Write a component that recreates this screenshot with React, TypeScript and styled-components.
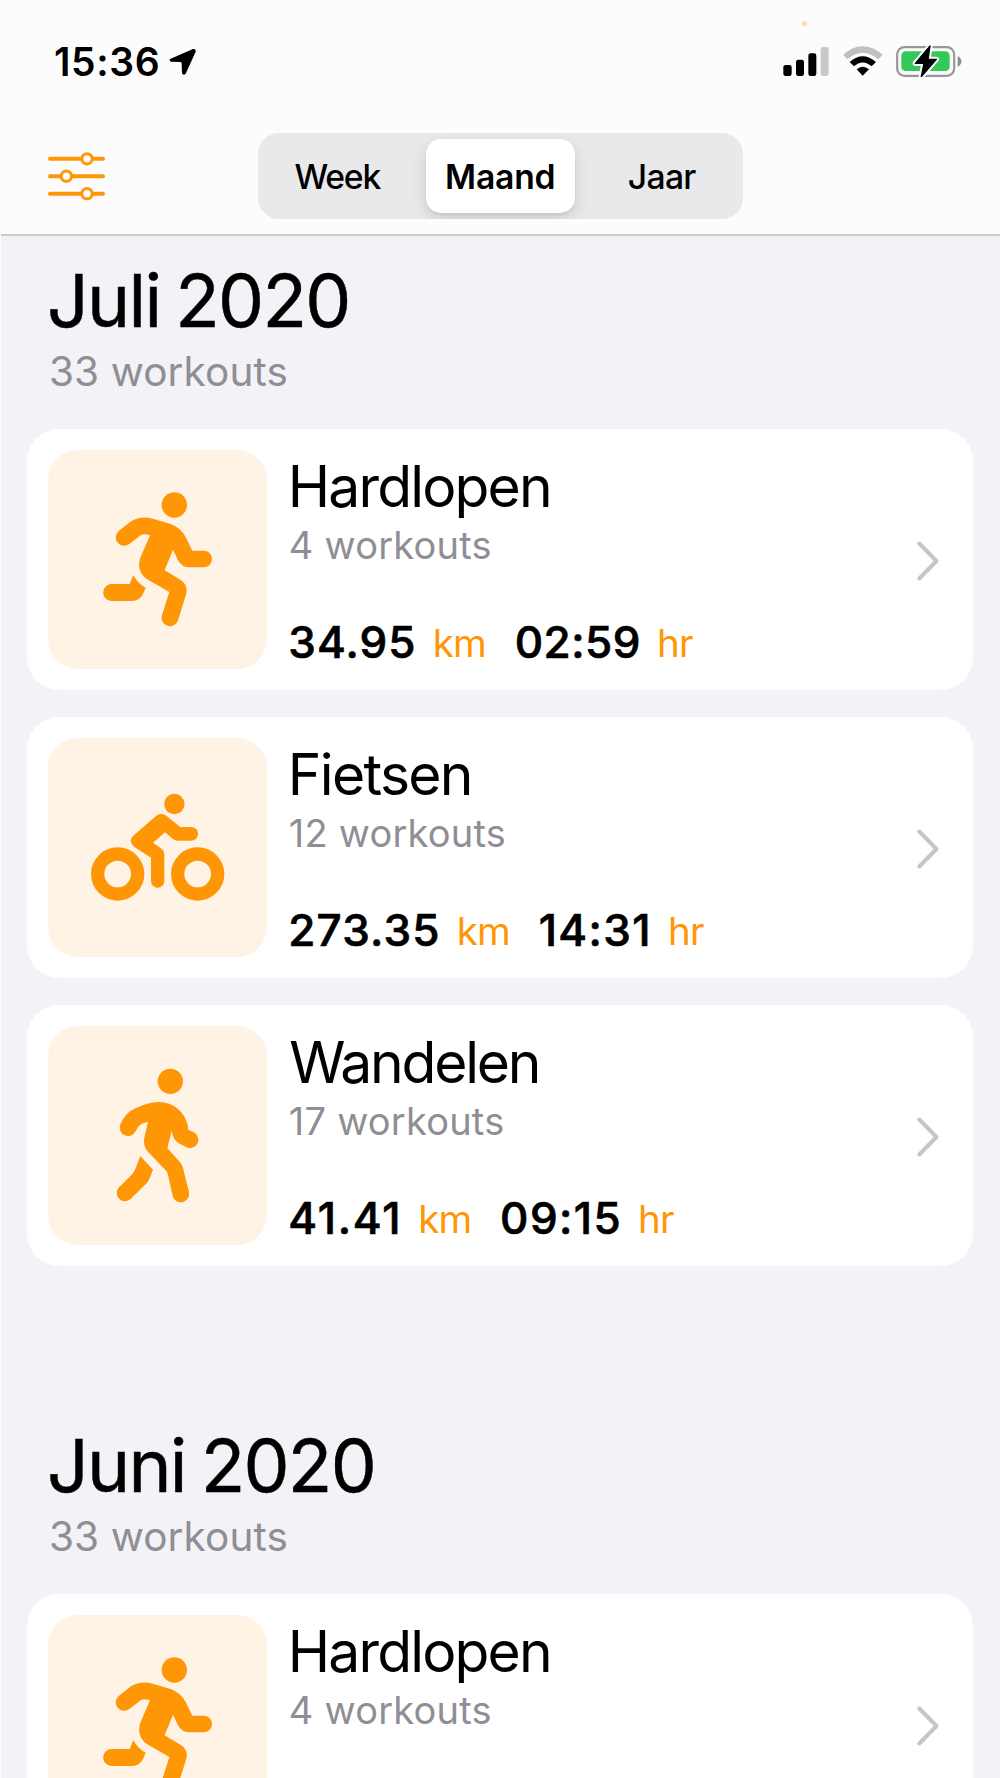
import React from "react";
import styled, { createGlobalStyle } from "styled-components";

const ORANGE = "#ff9605";
const GREY = "#8f8e94";

const GlobalStyle = createGlobalStyle`
  *, *::before, *::after { box-sizing: border-box; }
  body { margin: 0; background: #f2f2f7; overflow: hidden; }
`;

const Screen = styled.div`
  width: 1000px;
  height: 1778px;
  overflow: hidden;
  background: #f2f2f7;
  border-left: 1px solid #fbfbfc;
  font-family: "Inter", "Liberation Sans", sans-serif;
  color: #000;
`;

const Header = styled.header`
  height: 236px;
  background: #fcfcfc;
  border-bottom: 2px solid #cbcbcf;
`;

const StatusBar = styled.div`
  position: relative;
  height: 133px;
  padding: 37px 38px 0 53px;
  display: flex;
  justify-content: space-between;
`;

const RecordingDot = styled.span`
  position: absolute;
  left: 800.5px;
  top: 20.5px;
  width: 5px;
  height: 5px;
  border-radius: 50%;
  background: #fbdcae;
`;

const ClockGroup = styled.div`
  display: flex;
  height: 50px;
  align-items: center;
`;

const Clock = styled.span`
  font-size: 39px;
  font-weight: 600;
  line-height: 48px;
  letter-spacing: 0.6px;
`;

const LocationArrow = styled.svg`
  width: 27px;
  height: 28px;
  margin-left: 9px;
`;

const StatusIcons = styled.div`
  display: flex;
  gap: 13.67px;
  margin-top: 8px;
  height: 32px;
`;

const StatusIcon = styled.svg<{ $width: number }>`
  width: ${(p) => p.$width}px;
  height: 32px;
`;

const Toolbar = styled.div`
  display: grid;
  grid-template-columns: 210px 484.5px 1fr;
  align-items: start;
  padding-left: 47px;
`;

const FilterIcon = styled.svg`
  width: 57px;
  height: 49px;
  margin-top: 18.5px;
  fill: none;
  stroke: ${ORANGE};
`;

const Segmented = styled.div`
  display: grid;
  grid-template-columns: repeat(3, 1fr);
  height: 85.5px;
  padding: 6px 0 5.5px;
  border-radius: 21px;
  background: #e9e9eb;
  overflow: hidden;
`;

const Segment = styled.button<{ $active?: boolean; $tracking: number }>`
  margin: 0 6px;
  border: 0;
  padding: 1px 0 0;
  font-family: inherit;
  font-size: 33.7px;
  line-height: 40px;
  color: #000;
  font-weight: ${(p) => (p.$active ? 600 : 500)};
  letter-spacing: ${(p) => p.$tracking}px;
  border-radius: 15px;
  background: ${(p) => (p.$active ? "#fff" : "transparent")};
  box-shadow: ${(p) => (p.$active ? "0 6px 16px rgba(0, 0, 0, 0.13), 0 2px 3px rgba(0, 0, 0, 0.05)" : "none")};

  &:first-child {
    padding-right: 3px;
  }
`;

const Section = styled.section`
  padding: 25px 27px 0 26px;
  margin-bottom: 135px;
`;

const SectionHeader = styled.div`
  padding: 0 0 33px 20px;
`;

const SectionTitle = styled.h1`
  margin: 0;
  font-size: 73px;
  font-weight: 400;
  line-height: 80px;
  letter-spacing: -1.7px;
  word-spacing: -4px;
  -webkit-text-stroke: 0.5px #000;
  stroke-linejoin: round;
`;

const SectionCount = styled.p`
  margin: 7px 0 0 2px;
  font-size: 40.5px;
  line-height: 48px;
  letter-spacing: 0.1px;
  color: ${GREY};
`;

const CardList = styled.div`
  display: flex;
  flex-direction: column;
  gap: 27px;
`;

const Card = styled.article`
  display: flex;
  height: 261px;
  padding: 21px 34px 21px 21px;
  border-radius: 32px;
  background: #fff;
`;

const Tile = styled.svg`
  flex: none;
  width: 219px;
  height: 219px;
  border-radius: 30px;
  background: #fef3e4;
  fill: ${ORANGE};
`;

const Details = styled.div`
  flex: 1;
  padding: 4.5px 0 0 21.3px;
`;

const Name = styled.h2<{ $tracking: number; $indent: number }>`
  margin: 0 0 0 ${(p) => p.$indent}px;
  font-size: 57px;
  font-weight: 400;
  line-height: 64px;
  letter-spacing: ${(p) => p.$tracking}px;
`;

const Count = styled.p`
  margin: 4px 0 0 0.5px;
  font-size: 38px;
  line-height: 44px;
  letter-spacing: 0.23px;
  color: ${GREY};
`;

const Metrics = styled.div`
  display: flex;
  align-items: center;
  margin-top: 50px;
  gap: 28.5px;
`;

const Metric = styled.div`
  display: flex;
  align-items: center;
  gap: 16px;
  line-height: 50px;
`;

const Value = styled.span<{ $tracking: number }>`
  font-size: 44px;
  font-weight: 550;
  letter-spacing: ${(p) => p.$tracking}px;
  -webkit-text-stroke: 0.7px #000;
  stroke-linejoin: round;
`;

const Unit = styled.span`
  padding-top: 1px;
  font-size: 38.5px;
  letter-spacing: -0.7px;
  color: ${ORANGE};
`;

const Chevron = styled.svg`
  flex: none;
  align-self: center;
  width: 22px;
  height: 40px;
  margin-top: 2px;
  fill: none;
  stroke: #c6c6c9;
`;

type Sport = "run" | "ride" | "walk";

const SportIcon = ({ sport }: { sport: Sport }) => {
  if (sport === "run")
    return (
      <Tile viewBox="84 92 657 657">
        <circle cx="463" cy="257" r="38" />
        <path d="M297 334L333 306Q361 288 398 298L452 314Q482 325 497 353L517 394H551A25 25 0 0 1 551 444H510Q485 444 473 421L459 391L434 453L479 480Q506 496 499 523L474 603A25 25 0 0 1 426 588L448 518L384 481Q347 457 361 415L390 348Q372 341 360 349L328 374A25 25 0 0 1 297 334Z" />
        <path d="M340 467Q353 493 377 505L371 520Q360 545 336 545H275A25.5 25.5 0 0 1 275 494H329Z" />
      </Tile>
    );
  if (sport === "ride")
    return (
      <Tile viewBox="84 85 657 657">
        <g fill="none" stroke={ORANGE} strokeWidth="40">
          <circle cx="293" cy="493" r="60" />
          <circle cx="533" cy="493" r="60" />
        </g>
        <circle cx="463" cy="283" r="30.5" />
        <path d="M409 318Q423 307 437 317L481 352H514A20.5 20.5 0 0 1 514 393H473Q466 393 460 389L435 368L399 399L425 417Q433 423 433 434V514A20 20 0 0 1 393 514V444L342 411Q324 396 339 379Z" />
      </Tile>
    );
  return (
    <Tile viewBox="84 78 657 657">
      <circle cx="451" cy="244" r="38" />
      <path d="M301 373Q316 337 348 324L372 314Q392 306 416 306Q450 306 474 327Q496 346 503 375L505 389L525 399A25 25 0 0 1 503 443L479 431Q463 423 458 405L455 393L442 445L479 485Q486 493 489 504L507 577A25 25 0 0 1 458 587L443 521Q441 514 436 510L384 455Q368 437 373 413L384 365Q360 370 353 383L347 393A25 25 0 0 1 301 373Z" />
      <path d="M361 468L399 509L389 534Q386 543 380 550L331 598A25 25 0 0 1 295 564L338 521Q343 515 346 507Z" />
    </Tile>
  );
};

interface Activity {
  sport: Sport;
  name: string;
  nameTracking: number;
  nameIndent: number;
  count: number;
  distance: string;
  distanceTracking: number;
  time: string;
  timeTracking: number;
}

const running: Activity = {
  sport: "run", name: "Hardlopen", nameTracking: -1.85, nameIndent: -0.5, count: 4,
  distance: "34.95", distanceTracking: 1.1, time: "02:59", timeTracking: 0.5,
};
const cycling: Activity = {
  sport: "ride", name: "Fietsen", nameTracking: -1.67, nameIndent: -0.5, count: 12,
  distance: "273.35", distanceTracking: 1.2, time: "14:31", timeTracking: 1.4,
};
const walking: Activity = {
  sport: "walk", name: "Wandelen", nameTracking: -2.25, nameIndent: 1, count: 17,
  distance: "41.41", distanceTracking: 1.7, time: "09:15", timeTracking: 1.4,
};

const months = [
  { title: "Juli 2020", total: 33, activities: [running, cycling, walking] },
  { title: "Juni 2020", total: 33, activities: [running] },
];

const ActivityCard = ({ activity: a }: { activity: Activity }) => (
  <Card>
    <SportIcon sport={a.sport} />
    <Details>
      <Name $tracking={a.nameTracking} $indent={a.nameIndent}>{a.name}</Name>
      <Count>{a.count} workouts</Count>
      <Metrics>
        <Metric>
          <Value $tracking={a.distanceTracking}>{a.distance}</Value>
          <Unit>km</Unit>
        </Metric>
        <Metric>
          <Value $tracking={a.timeTracking}>{a.time}</Value>
          <Unit>hr</Unit>
        </Metric>
      </Metrics>
    </Details>
    <Chevron viewBox="0 0 22 40" strokeWidth="4" strokeLinecap="round" strokeLinejoin="round">
      <path d="M2.3 2.5L19.5 20L2.3 37.5" />
    </Chevron>
  </Card>
);

export default function App() {
  return (
    <Screen>
      <GlobalStyle />
      <Header>
        <StatusBar>
          <RecordingDot />
          <ClockGroup>
            <Clock>15:36</Clock>
            <LocationArrow viewBox="508 143 81 82">
              <path d="M580 145Q589 143 588 153L558 219Q552 226 547 218L546 188Q546 184 541 184L514 183Q506 179 513 174Z" />
            </LocationArrow>
          </ClockGroup>
          <StatusIcons>
            <StatusIcon $width={46} viewBox="850 135 138 96">
              <rect x="851" y="195" width="25" height="33" rx="7" />
              <rect x="889" y="179" width="24" height="49" rx="7" />
              <rect x="926" y="160" width="24" height="68" rx="7" />
              <rect x="963" y="141" width="24" height="87" rx="7" fill="#c9c9cb" />
            </StatusIcon>
            <StatusIcon $width={39.67} viewBox="1029 135 119 96">
              <path d="M1029 164Q1088 114 1148 164L1135 178Q1088 139 1042 178Z" fill="#c0c0c1" />
              <path d="M1049 186Q1088 151 1128 186L1115 199Q1088 176 1062 199Z" />
              <path d="M1070 208Q1088 192 1107 208L1088 227Z" />
            </StatusIcon>
            <StatusIcon $width={65.67} viewBox="1189 135 197 96">
              <rect x="1192.5" y="141.5" width="171" height="86" rx="22" fill="none" stroke="#979798" strokeWidth="6.5" />
              <path d="M1374 168Q1385 174 1385 184Q1385 195 1374 201Z" fill="#8c8c8d" />
              <rect x="1205" y="154" width="145" height="59" rx="13" fill="#34c85a" />
              <path
                d="M1291 138L1247 190H1273L1265 230L1310 178H1285Z"
                stroke="#fcfcfc" strokeWidth="16" strokeLinejoin="round"
              />
              <path d="M1291 138L1247 190H1273L1265 230L1310 178H1285Z" stroke="#000" strokeWidth="4" strokeLinejoin="round" />
            </StatusIcon>
          </StatusIcons>
        </StatusBar>
        <Toolbar>
          <FilterIcon viewBox="145 455 171 147">
            <path d="M151 475.5H310M151 527.5H310M151 580H310" strokeWidth="12" strokeLinecap="round" />
            <g fill="#fff" strokeWidth="9">
              <circle cx="262" cy="475.5" r="15.5" />
              <circle cx="200" cy="527.5" r="15.5" />
              <circle cx="262" cy="580" r="15.5" />
            </g>
          </FilterIcon>
          <Segmented>
            <Segment $tracking={-1.2}>Week</Segment>
            <Segment $active $tracking={-0.2}>Maand</Segment>
            <Segment $tracking={-0.7}>Jaar</Segment>
          </Segmented>
        </Toolbar>
      </Header>
      {months.map((m) => (
        <Section key={m.title}>
          <SectionHeader>
            <SectionTitle>{m.title}</SectionTitle>
            <SectionCount>{m.total} workouts</SectionCount>
          </SectionHeader>
          <CardList>
            {m.activities.map((a) => (
              <ActivityCard key={a.name} activity={a} />
            ))}
          </CardList>
        </Section>
      ))}
    </Screen>
  );
}
